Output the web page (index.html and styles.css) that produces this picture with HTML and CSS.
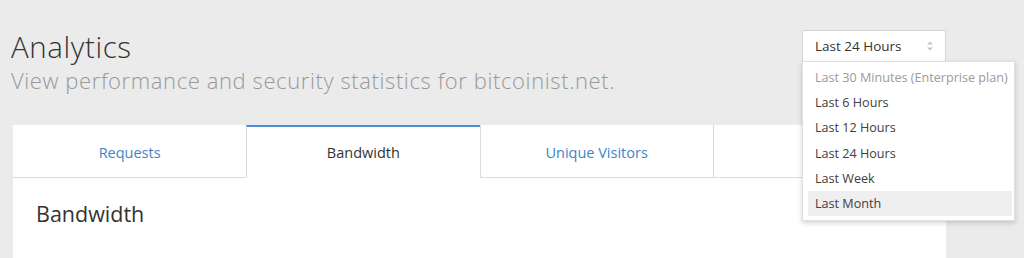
FILE: index.html
```html
<!DOCTYPE html>
<html>
<head>
<meta charset="utf-8">
<link rel="stylesheet" href="styles.css">
</head>
<body>
<div class="page">
  <header class="header">
    <div class="titles">
      <h1 class="title">Analytics</h1>
      <p class="subtitle">View performance and security statistics for bitcoinist.net.</p>
    </div>
    <div class="select">
      <div class="select-box">
        <span class="select-value">Last 24 Hours</span>
        <svg class="select-arrows" width="8" height="12" viewBox="0 0 8 12"><path d="M1 4.5 L4 1.5 L7 4.5 Z M1 7.5 L4 10.5 L7 7.5 Z" fill="#c4c4c4"/></svg>
      </div>
      <ul class="menu">
        <li class="menu-item disabled">Last 30 Minutes (Enterprise plan)</li>
        <li class="menu-item">Last 6 Hours</li>
        <li class="menu-item">Last 12 Hours</li>
        <li class="menu-item">Last 24 Hours</li>
        <li class="menu-item">Last Week</li>
        <li class="menu-item hover">Last Month</li>
      </ul>
    </div>
  </header>
  <section class="card">
    <nav class="tabs">
      <div class="tab link">Requests</div>
      <div class="tab active">Bandwidth</div>
      <div class="tab link">Unique Visitors</div>
      <div class="tab link"></div>
    </nav>
    <div class="card-body">
      <h2 class="card-title">Bandwidth</h2>
    </div>
  </section>
</div>
</body>
</html>
```
FILE: styles.css
```css
* { box-sizing: border-box; }
html, body { margin: 0; padding: 0; }
body {
  background: #ebebeb;
  font-family: "Open Sans", "Noto Sans", sans-serif;
  color: #333;
  width: 1024px;
  height: 258px;
  overflow: hidden;
}
.page { padding: 0 0 0 13px; width: 946px; }
.header {
  display: flex;
  justify-content: space-between;
  align-items: flex-start;
  padding-top: 28px;
  height: 125px;
}
.title {
  margin: 0;
  font-size: 29.5px;
  font-weight: 300;
  letter-spacing: 0.6px;
  line-height: 38px;
  color: #333;
  margin-left: -2px;
}
.subtitle {
  margin: 0;
  font-size: 22px;
  font-weight: 300;
  letter-spacing: 0.6px;
  line-height: 28px;
  color: #999;
  margin-left: -2px;
}
.select {
  position: relative;
  margin-top: 2px;
  width: 144px;
}
.select-box {
  height: 32px;
  background: #fff;
  border: 1px solid #d4d4d4;
  border-radius: 2px;
  display: flex;
  align-items: center;
  justify-content: space-between;
  padding: 0 11px 0 12px;
  font-size: 13.5px;
  color: #333;
}
.select-arrows { display: block; }
.menu {
  position: absolute;
  top: 31px;
  left: 0;
  width: 213px;
  margin: 0;
  padding: 3px 2px 4px 5px;
  list-style: none;
  background: #fff;
  border: 1px solid #e0e0e0;
  box-shadow: 0 2px 5px rgba(0,0,0,0.18);
  z-index: 2;
}
.menu-item {
  height: 25.2px;
  line-height: 25px;
  font-size: 12.6px;
  padding-left: 7px;
  color: #404040;
  white-space: nowrap;
}
.menu-item.disabled { color: #9a9a9a; }
.menu-item.hover { background: #efefef; }
.card {
  background: #fff;
  width: 933px;
  height: 140px;
}
.tabs {
  display: grid;
  grid-template-columns: repeat(4, 1fr);
  height: 53px;
}
.tab {
  display: flex;
  align-items: center;
  justify-content: center;
  font-size: 14.5px;
  border-bottom: 1px solid #dcdcdc;
  border-left: 1px solid #dcdcdc;
  padding-top: 2px;
}
.tab:first-child { border-left: none; }
.tab.link { color: #3d86c6; }
.tab.active {
  color: #333;
  border-bottom-color: transparent;
  border-top: 2px solid #4a8fd8;
  padding-top: 0;
}
.card-body { padding: 22px 23px; }
.card-title {
  margin: 0;
  font-size: 21.5px;
  font-weight: 400;
  line-height: 28px;
  color: #333;
}
```
